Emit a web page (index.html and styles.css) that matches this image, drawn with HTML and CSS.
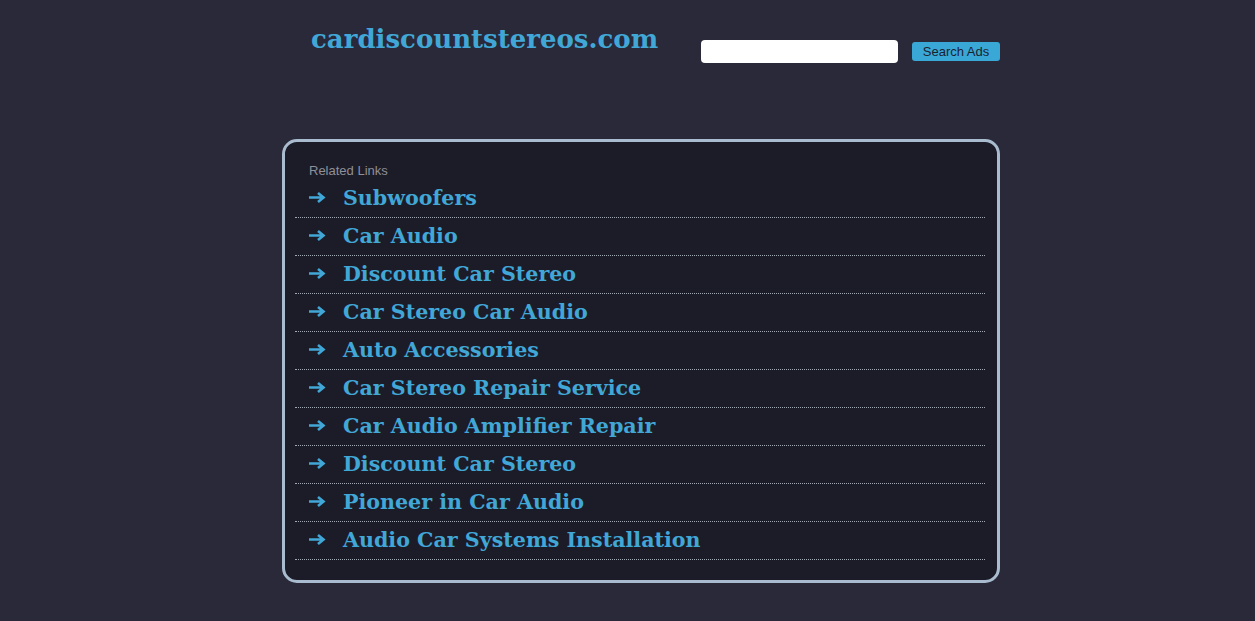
FILE: index.html
```html
<!DOCTYPE HTML>
<html>
  <head>
    <meta http-equiv="Content-type" content="text/html;charset=UTF-8">
    <title>cardiscountstereos.com</title>
    <link rel="stylesheet" href="styles.css">
  </head>
  <body>
    <div class="page">
      <div class="header">
        <h1 class="domain">cardiscountstereos.com</h1>
        <form class="search" name="searchform">
          <input class="search-box" name="q" type="text">
          <input class="search-btn" type="button" value="Search Ads">
        </form>
      </div>

      <div class="links">
        <div class="links-title">Related Links</div>
        <ul class="link-list">
          <li><svg class="arrow" viewBox="0 0 17 11"><path d="M0 5.5H14M9 1L14.5 5.5L9 10"/></svg><a href="#">Subwoofers</a></li>
          <li><svg class="arrow" viewBox="0 0 17 11"><path d="M0 5.5H14M9 1L14.5 5.5L9 10"/></svg><a href="#">Car Audio</a></li>
          <li><svg class="arrow" viewBox="0 0 17 11"><path d="M0 5.5H14M9 1L14.5 5.5L9 10"/></svg><a href="#">Discount Car Stereo</a></li>
          <li><svg class="arrow" viewBox="0 0 17 11"><path d="M0 5.5H14M9 1L14.5 5.5L9 10"/></svg><a href="#">Car Stereo Car Audio</a></li>
          <li><svg class="arrow" viewBox="0 0 17 11"><path d="M0 5.5H14M9 1L14.5 5.5L9 10"/></svg><a href="#">Auto Accessories</a></li>
          <li><svg class="arrow" viewBox="0 0 17 11"><path d="M0 5.5H14M9 1L14.5 5.5L9 10"/></svg><a href="#">Car Stereo Repair Service</a></li>
          <li><svg class="arrow" viewBox="0 0 17 11"><path d="M0 5.5H14M9 1L14.5 5.5L9 10"/></svg><a href="#">Car Audio Amplifier Repair</a></li>
          <li><svg class="arrow" viewBox="0 0 17 11"><path d="M0 5.5H14M9 1L14.5 5.5L9 10"/></svg><a href="#">Discount Car Stereo</a></li>
          <li><svg class="arrow" viewBox="0 0 17 11"><path d="M0 5.5H14M9 1L14.5 5.5L9 10"/></svg><a href="#">Pioneer in Car Audio</a></li>
          <li><svg class="arrow" viewBox="0 0 17 11"><path d="M0 5.5H14M9 1L14.5 5.5L9 10"/></svg><a href="#">Audio Car Systems Installation</a></li>
        </ul>
      </div>
    </div>
  </body>
</html>
```

FILE: styles.css
```css
html, body {
margin: 0;
background: #292939;
font-family: "Liberation Sans", Arial, sans-serif;
}
.page {
width: 718px;
margin-left: 282px;
padding-top: 20px;
}
.header {
display: flex;
align-items: flex-start;
height: 119px;
}
.domain {
margin: 0 0 0 29px;
font-family: "DejaVu Serif", serif;
font-size: 26px;
font-weight: bold;
color: #41a7d6;
line-height: 38px;
}
.search {
display: flex;
align-items: center;
margin: 20px 0 0 auto;
}
.search-box {
width: 197px;
height: 23px;
box-sizing: border-box;
border: none;
border-radius: 4px;
background: #fff;
margin-right: 14px;
}
.search-btn {
width: 88px;
height: 19px;
border: none;
border-radius: 3px;
background: #3aa8d6;
color: #1a2230;
font-family: "Liberation Sans", Arial, sans-serif;
font-size: 13px;
padding: 0;
}
.links {
border: 3px solid #a9bccf;
border-radius: 15px;
background: #1c1c28;
padding: 20px 12px 20px 10px;
}
.links-title {
padding-left: 14px;
font-size: 13px;
line-height: 18px;
color: #8f8f98;
}
.link-list {
list-style: none;
margin: 0;
padding: 0;
}
.link-list li {
display: flex;
align-items: center;
height: 37px;
padding-left: 14px;
border-bottom: 1px dotted #a3a9b3;
}
.arrow {
width: 17px;
height: 11px;
margin: 0 17px 0 0;
position: relative;
top: -1px;
fill: none;
stroke: #41a7d6;
stroke-width: 2.6;
}
.link-list a {
font-family: "DejaVu Serif", serif;
font-size: 20.6px;
font-weight: bold;
color: #41a7d6;
text-decoration: none;
position: relative;
top: -1px;
}
```
